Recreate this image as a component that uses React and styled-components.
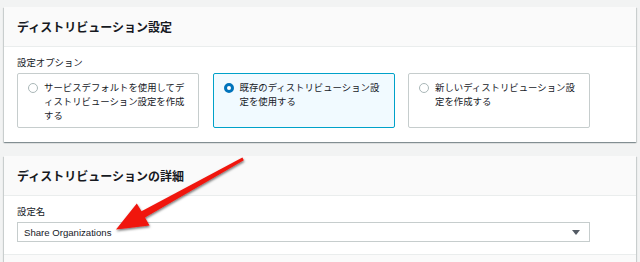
import React, { useState } from "react";
import styled, { createGlobalStyle } from "styled-components";

const GlobalStyle = createGlobalStyle`
  html, body {
    margin: 0;
    padding: 0;
    background: #f2f3f3;
    font-family: "Noto Sans CJK JP", "Noto Sans", sans-serif;
    color: #16191f;
  }
`;

const options = [
  { id: "default", label: "サービスデフォルトを使用してディストリビューション設定を作成する" },
  { id: "existing", label: "既存のディストリビューション設定を使用する" },
  { id: "new", label: "新しいディストリビューション設定を作成する" },
];

const App = () => {
  const [selected, setSelected] = useState("existing");

  return (
    <>
      <GlobalStyle />
      <Page>
        <Panel>
          <PanelHeader>
            <Title>ディストリビューション設定</Title>
          </PanelHeader>
          <PanelBody>
            <Form>
              <Label>設定オプション</Label>
              <Tiles>
                {options.map((opt) => (
                  <Tile
                    key={opt.id}
                    $active={selected === opt.id}
                    onClick={() => setSelected(opt.id)}
                  >
                    <Radio $active={selected === opt.id} />
                    <TileText>{opt.label}</TileText>
                  </Tile>
                ))}
              </Tiles>
            </Form>
          </PanelBody>
        </Panel>

        <Panel>
          <PanelHeader>
            <Title>ディストリビューションの詳細</Title>
          </PanelHeader>
          <PanelBody $bottom={12}>
            <Form>
              <Label>設定名</Label>
              <Select>
                <span>Share Organizations</span>
                <Caret />
              </Select>
            </Form>
          </PanelBody>
          <PanelFooter />
        </Panel>

        <Arrow width="640" height="262" viewBox="0 0 640 262">
          <defs>
            <filter id="shadow" x="-20%" y="-20%" width="140%" height="140%">
              <feDropShadow dx="0.5" dy="1.5" stdDeviation="1" floodColor="#000" floodOpacity="0.55" />
            </filter>
          </defs>
          <polygon
            points="116,229.5 149.5,225.5 145,217.5 243.8,160.3 242.4,157.6 141.5,211.3 136.8,203.5"
            fill="#f0140f"
            filter="url(#shadow)"
          />
        </Arrow>
      </Page>
    </>
  );
};

export default App;

const Page = styled.div`
  position: relative;
  padding: 7px 4px 0 4px;
  display: flex;
  flex-direction: column;
  gap: 14px;
  height: 262px;
  box-sizing: border-box;
  overflow: hidden;
`;

const Panel = styled.section`
  background: #fff;
  box-shadow: 0 1px 1px 0 rgba(0, 28, 36, 0.3), 1px 1px 1px 0 rgba(0, 28, 36, 0.12),
    -1px 1px 1px 0 rgba(0, 28, 36, 0.12);
`;

const PanelHeader = styled.div`
  height: 40px;
  display: flex;
  align-items: center;
  padding: 0 13px;
  background: #fafafa;
  border-bottom: 1px solid #eaeded;
  box-sizing: border-box;
`;

const Title = styled.h2`
  margin: 0;
  font-size: 12px;
  font-weight: 700;
  line-height: 16px;
  color: #16191f;
`;

const PanelBody = styled.div`
  padding: 9px 13px ${(p) => (p.$bottom !== undefined ? p.$bottom : 14)}px 13px;
`;

const PanelFooter = styled.div`
  height: 10px;
  background: #fafafa;
  border-top: 1px solid #eaeded;
`;

const Form = styled.div`
  width: 573px;
  display: flex;
  flex-direction: column;
`;

const Label = styled.div`
  font-size: 9.4px;
  line-height: 12px;
  color: #16191f;
  margin-bottom: 5px;
`;

const Tiles = styled.div`
  display: grid;
  grid-template-columns: repeat(3, 182px);
  column-gap: 13.5px;
`;

const Tile = styled.div`
  display: flex;
  align-items: flex-start;
  height: 55px;
  box-sizing: border-box;
  padding: 6px 10px 6px 10px;
  border: 1px solid ${(p) => (p.$active ? "#00a1c9" : "#c6cdcd")};
  background: ${(p) => (p.$active ? "#f1faff" : "#fff")};
  border-radius: 2px;
  cursor: pointer;
`;

const Radio = styled.span`
  flex: none;
  width: 10px;
  height: 10px;
  margin: 3px 6px 0 0;
  border-radius: 50%;
  box-sizing: border-box;
  background: #fff;
  border: ${(p) => (p.$active ? "3.2px solid #0073bb" : "1px solid #aab7b8")};
`;

const TileText = styled.span`
  font-size: 9.4px;
  line-height: 14px;
  color: #16191f;
`;

const Select = styled.div`
  height: 20px;
  box-sizing: border-box;
  display: flex;
  align-items: center;
  justify-content: space-between;
  padding: 0 9px 0 6px;
  border: 1px solid #c6cdcd;
  background: #fff;
  font-family: "Liberation Sans", Arial, sans-serif;
  font-size: 9.6px;
  color: #16191f;
`;

const Caret = styled.span`
  width: 0;
  height: 0;
  border-left: 4px solid transparent;
  border-right: 4px solid transparent;
  border-top: 5px solid #545b64;
`;

const Arrow = styled.svg`
  position: absolute;
  left: 0;
  top: 0;
  pointer-events: none;
`;
